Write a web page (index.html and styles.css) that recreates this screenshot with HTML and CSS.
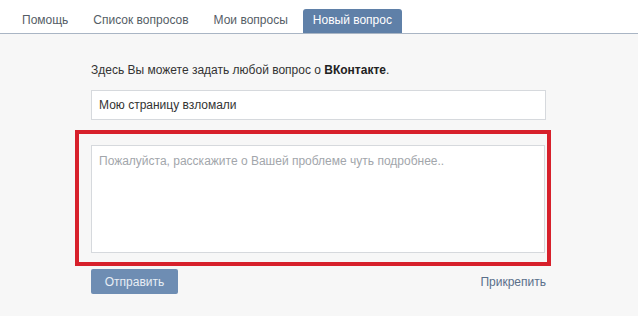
FILE: index.html
```html
<!DOCTYPE html>
<html lang="ru">
<head>
    <meta charset="UTF-8">
    <meta name="viewport" content="width=device-width, initial-scale=1.0">
    <title>Новый вопрос</title>
    <link rel="stylesheet" href="styles.css">
</head>
<body>
    <div class="tabs">
        <a class="tab">Помощь</a>
        <a class="tab">Список вопросов</a>
        <a class="tab">Мои вопросы</a>
        <a class="tab active">Новый вопрос</a>
    </div>
    <div class="page">
        <div class="form">
            <p class="intro">Здесь Вы можете задать любой вопрос о <b>ВКонтакте</b>.</p>
            <input class="title" type="text" value="Мою страницу взломали">
            <div class="highlight">
                <textarea class="text" placeholder="Пожалуйста, расскажите о Вашей проблеме чуть подробнее.."></textarea>
            </div>
            <div class="actions">
                <button class="send">Отправить</button>
                <a class="attach">Прикрепить</a>
            </div>
        </div>
    </div>
</body>
</html>
```

FILE: styles.css
```css
body { margin: 0; font-family: "Liberation Sans", Arial, sans-serif; font-size: 12px; color: #333; background: #f7f7f7; }
.tabs { display: flex; align-items: flex-end; gap: 5px; height: 33px; padding-left: 12px; background: #fff; border-bottom: 1px solid #a9b5c4; }
.tab { display: block; height: 24px; line-height: 23px; padding: 0 10px; color: #555d66; cursor: pointer; }
.tab.active { background: #5f80a8; color: #fff; border-radius: 3px 3px 0 0; }
.page { padding: 29px 0 0 91px; }
.form { width: 455px; }
.intro { margin: 0 0 12px; line-height: 15px; color: #333; }
.intro b { color: #222; }
.title { display: block; box-sizing: border-box; width: 100%; height: 30px; margin: 0; padding: 0 7px; border: 1px solid #d6d9dd; background: #fff; font: inherit; color: #333; outline: none; }
.highlight { margin: 10px -5px 0 -16px; padding: 11px 2px 9px 12px; border: 4px solid #d7202b; }
.text { display: block; box-sizing: border-box; width: 100%; height: 108px; margin: 0; padding: 8px 7px; border: 1px solid #d6d9dd; background: #fff; font: inherit; color: #333; resize: none; outline: none; }
.text::placeholder { color: #a2a6ab; }
.actions { display: flex; justify-content: space-between; align-items: center; margin-top: 3px; }
.send { width: 87px; height: 25px; padding: 0; border: none; border-radius: 2px; background: #6e8db3; color: #e8eef5; font: inherit; cursor: pointer; }
.attach { color: #5a6f8a; cursor: pointer; padding-top: 1px; }
```
